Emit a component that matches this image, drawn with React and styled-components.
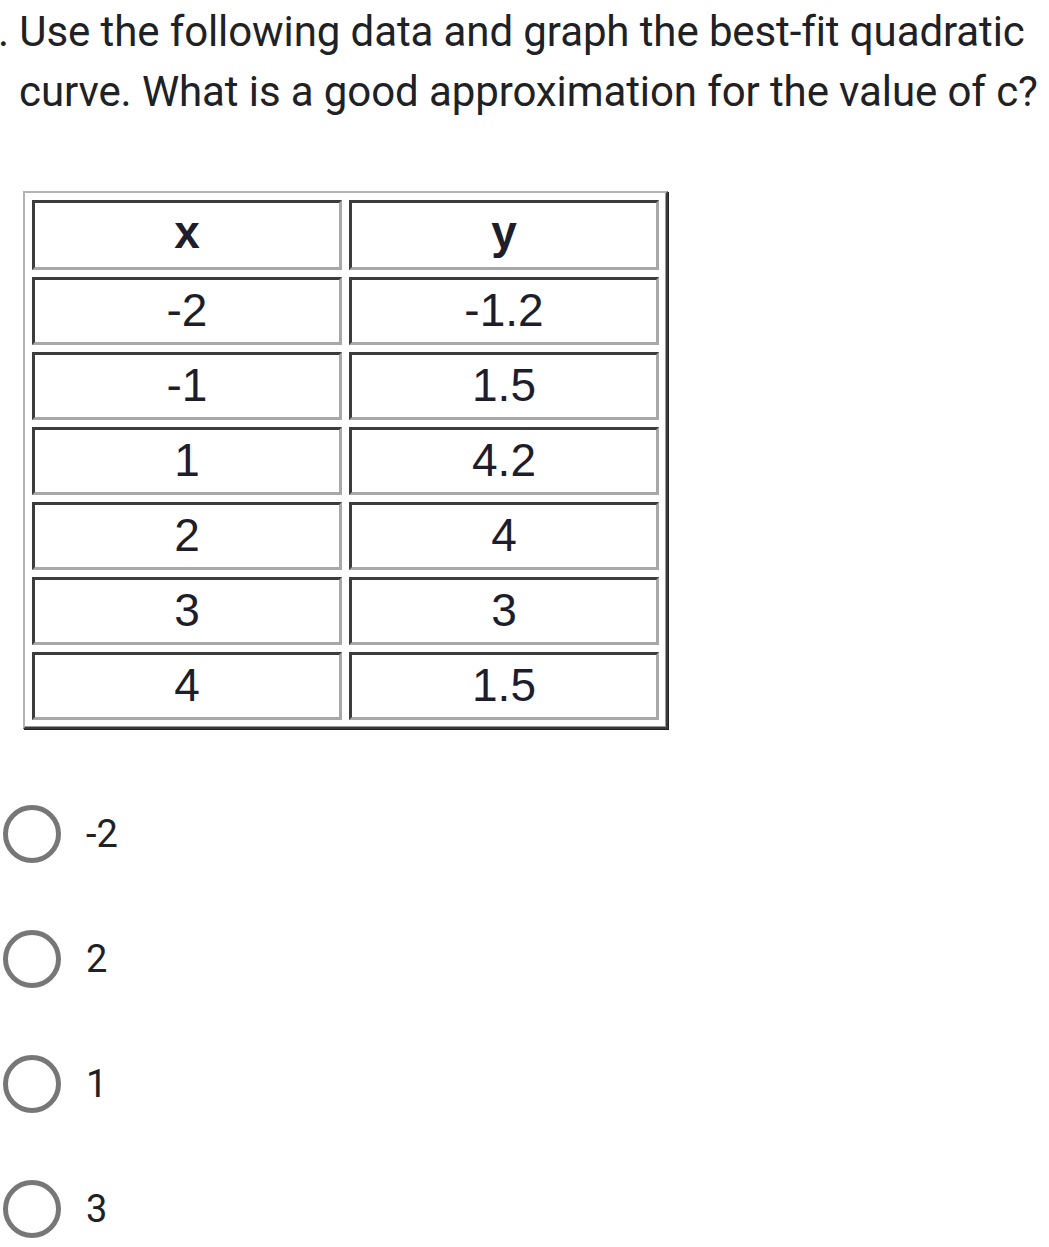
import React from "react";
import styled, { createGlobalStyle } from "styled-components";

const rows = [
  ["-2", "-1.2"],
  ["-1", "1.5"],
  ["1", "4.2"],
  ["2", "4"],
  ["3", "3"],
  ["4", "1.5"],
];

const options = ["-2", "2", "1", "3"];

const Global = createGlobalStyle`
  html, body { margin: 0; padding: 0; background: #fff; }
  body { font-family: Roboto, "Noto Sans", sans-serif; color: #202124; }
`;

const Page = styled.main`
  width: 1049px;
  min-height: 1247px;
  overflow: hidden;
`;

const Question = styled.p`
  margin: 0;
  padding: 2px 0 0 19px;
  font-size: 42px;
  line-height: 60px;
  letter-spacing: -0.1px;
  color: #202124;
  text-indent: -21px;
`;

const DataTable = styled.table`
  margin: 69px 0 0 23px;
  border-collapse: separate;
  border-spacing: 7px;
  border-style: solid;
  border-width: 2px;
  border-color: #b4b4b4 #3a3a3a #3a3a3a #b4b4b4;
  box-shadow: inset -1px -1px 0 #9a9a9a, 1px 1px 0 #222;
  font-family: "Liberation Sans", Arial, sans-serif;
  color: #1d1d2b;
`;

const Cell = styled.td`
  width: 304px;
  height: ${(p) => (p.$head ? 58 : 60)}px;
  padding: 0 0 ${(p) => (p.$head ? 6 : 2)}px;
  text-align: center;
  vertical-align: middle;
  border-style: solid;
  border-width: 3px;
  border-color: #3c3c3c #a8a8a8 #a8a8a8 #3c3c3c;
  font-size: 46px;
  font-weight: ${(p) => (p.$head ? 700 : 400)};
  line-height: 1;
`;

const Options = styled.ul`
  list-style: none;
  margin: 76px 0 0 0;
  padding: 0 0 0 3px;
  display: flex;
  flex-direction: column;
  gap: 67px;
`;

const Option = styled.li`
  display: flex;
  align-items: center;
  gap: 25px;
  height: 58px;
`;

const Radio = styled.span`
  width: 58px;
  height: 58px;
  box-sizing: border-box;
  border-radius: 50%;
  border: 5.5px solid #777;
  flex: none;
`;

const Label = styled.span`
  font-size: 38px;
  color: #202124;
  line-height: 1;
`;

export default function App() {
  return (
    <Page>
      <Global />
      <Question>
        . Use the following data and graph the best-fit quadratic curve. What
        is a good approximation for the value of c?
      </Question>

      <DataTable>
        <tbody>
          <tr>
            <Cell $head>x</Cell>
            <Cell $head>y</Cell>
          </tr>
          {rows.map(([x, y]) => (
            <tr key={x}>
              <Cell>{x}</Cell>
              <Cell>{y}</Cell>
            </tr>
          ))}
        </tbody>
      </DataTable>

      <Options>
        {options.map((o) => (
          <Option key={o}>
            <Radio />
            <Label>{o}</Label>
          </Option>
        ))}
      </Options>
    </Page>
  );
}
